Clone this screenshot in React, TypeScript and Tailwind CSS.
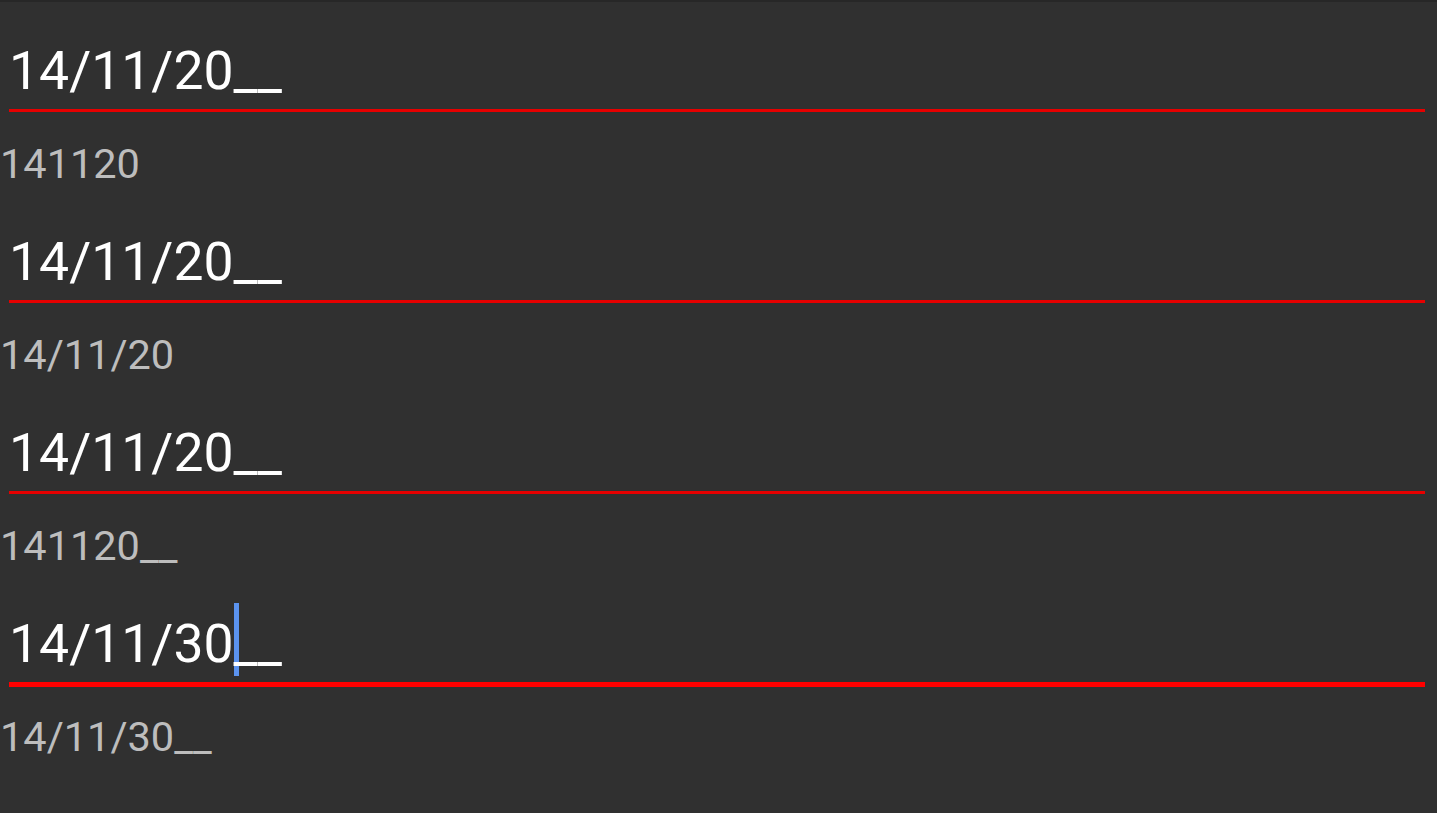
import React from 'react';

type Row = {
  value: string;
  echo: string;
  focused?: boolean;
};

const rows: Row[] = [
  { value: '14/11/20__', echo: '141120' },
  { value: '14/11/20__', echo: '14/11/20' },
  { value: '14/11/20__', echo: '141120__' },
  { value: '14/11/30__', echo: '14/11/30__', focused: true },
];

function MaskedField({ value, echo, focused }: Row) {
  // split so the caret can sit right before the mask placeholder
  const typed = value.replace(/_+$/, '');
  const rest = value.slice(typed.length);

  return (
    <div className="flex h-[191px] flex-col">
      <div className="pl-[9px] pr-[12px] pt-[39px]">
        <div className="flex h-[64px] items-start text-[53.5px] leading-[64px] text-white">
          <span>{typed}</span>
          {focused && <span className="-mt-[9px] h-[73px] w-[5px] shrink-0 bg-[#5b93ef]" />}
          <span className={focused ? '-ml-[5px]' : ''}>{rest}</span>
        </div>
        <div className={focused ? 'mt-[6px] h-[5px] bg-[#ff0000]' : 'mt-[6px] h-[3px] bg-[#e60000]'} />
      </div>
      <div
        className={
          focused
            ? 'mt-[25px] h-[50px] text-[41.5px] leading-[50px] text-[#bdbdbd]'
            : 'mt-[27px] h-[50px] text-[41.5px] leading-[50px] text-[#bdbdbd]'
        }
      >
        {echo}
      </div>
    </div>
  );
}

export default function App() {
  return (
    <div className="relative h-[813px] w-full overflow-hidden bg-[#303030] font-['Roboto',sans-serif]">
      <div className="h-[2px] bg-[#272727]" />
      <div className="-mt-[2px] flex flex-col">
        {rows.map((r, i) => (
          <MaskedField key={i} {...r} />
        ))}
      </div>
    </div>
  );
}
